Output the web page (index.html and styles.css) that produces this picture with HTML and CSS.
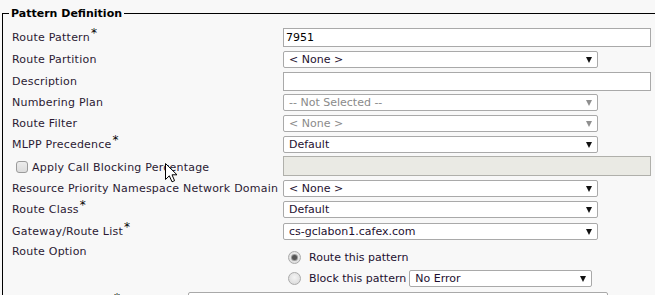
FILE: index.html
```html
<!DOCTYPE html>
<html>
<head>
<meta charset="utf-8">
<link rel="stylesheet" href="styles.css">
</head>
<body>
<fieldset class="group">
  <legend class="group-title">Pattern Definition</legend>
  <div class="form">
    <div class="row h22">
      <div class="label">Route Pattern<span class="req">*</span></div>
      <div class="field"><div class="input wide">7951</div></div>
    </div>
    <div class="row h22">
      <div class="label">Route Partition</div>
      <div class="field"><div class="select">&lt; None &gt;</div></div>
    </div>
    <div class="row h22">
      <div class="label">Description</div>
      <div class="field"><div class="input wide"></div></div>
    </div>
    <div class="row h21">
      <div class="label">Numbering Plan</div>
      <div class="field"><div class="select disabled">-- Not Selected --</div></div>
    </div>
    <div class="row h21">
      <div class="label">Route Filter</div>
      <div class="field"><div class="select disabled">&lt; None &gt;</div></div>
    </div>
    <div class="row h21">
      <div class="label">MLPP Precedence<span class="req">*</span></div>
      <div class="field"><div class="select">Default</div></div>
    </div>
    <div class="row h22">
      <div class="label check-label"><span class="checkbox"></span>Apply Call Blocking Percentage</div>
      <div class="field"><div class="input wide off"></div></div>
    </div>
    <div class="row h22">
      <div class="label">Resource Priority Namespace Network Domain</div>
      <div class="field"><div class="select">&lt; None &gt;</div></div>
    </div>
    <div class="row h21">
      <div class="label">Route Class<span class="req">*</span></div>
      <div class="field"><div class="select">Default</div></div>
    </div>
    <div class="row h22">
      <div class="label">Gateway/Route List<span class="req">*</span></div>
      <div class="field"><div class="select">cs-gclabon1.cafex.com</div></div>
    </div>
    <div class="row top">
      <div class="label">Route Option</div>
      <div class="field radios">
        <div class="radio-line"><span class="radio checked"></span>Route this pattern</div>
        <div class="radio-line"><span class="radio"></span>Block this pattern <div class="select small">No Error</div></div>
      </div>
    </div>
    <div class="row alt">
      <div class="label">Call Classification<span class="req">*</span></div>
      <div class="field"><div class="select">OffNet</div></div>
    </div>
  </div>
</fieldset>
<svg class="cursor" width="13" height="20" viewBox="0 0 13 20"><path d="M0.5 0.5 L0.5 16.5 L4.3 12.8 L7 18.8 L9.6 17.7 L7 11.8 L12 11.8 Z" fill="#fff" stroke="#000" stroke-width="1" stroke-linejoin="miter"/></svg>
</body>
</html>
```
FILE: styles.css
```css
html, body {
  margin: 0;
  padding: 0;
  background: #f8f8f8;
  overflow: hidden;
  width: 655px;
  height: 295px;
}
body {
  font-family: "DejaVu Sans", Verdana, sans-serif;
  font-size: 11px;
  color: #2b1a33;
  position: relative;
}
.group {
  margin: 7px 0 0 2px;
  padding: 0 0 0 6px;
  border: 1px solid #000;
  width: 720px;
}
.group-title {
  font-weight: bold;
  font-size: 11px;
  color: #000;
  padding: 0 2px;
  margin-left: 0;
  line-height: 13px;
}
.form {
  padding-top: 6px;
}
.row {
  display: flex;
  align-items: center;
}
.row.h22 { height: 22px; }
.row.h21 { height: 21px; }
.row.top { align-items: flex-start; }
.label {
  width: 271px;
  padding-left: 3px;
  white-space: nowrap;
  line-height: 13px;
  letter-spacing: 0.22px;
}
.row.top .label { padding-top: 3px; }
.req {
  color: #000;
  font-size: 12px;
  position: relative;
  top: -4px;
  margin-left: 1px;
}
.field {
  display: flex;
  align-items: center;
}
.input {
  box-sizing: border-box;
  height: 19px;
  border: 1px solid #a9a9a9;
  background: #fff;
  padding: 0 2px;
  line-height: 17px;
  color: #000;
}
.input.wide { width: 368px; }
.input.off { background: #eaeae4; border-color: #b0b0ab; height: 20px; }
.select {
  box-sizing: border-box;
  width: 315px;
  height: 17px;
  border: 1px solid #a9a9a9;
  border-radius: 2px;
  background: #fff;
  padding-left: 5px;
  line-height: 15px;
  color: #1e1030;
  position: relative;
}
.select::after {
  content: "";
  position: absolute;
  right: 5px;
  top: 5px;
  border-left: 3px solid transparent;
  border-right: 3px solid transparent;
  border-top: 6px solid #111;
}
.select.disabled { color: #8a8a8a; }
.select.disabled::after { border-top-color: #8f8f8f; }
.select.small {
  width: 183px;
  margin-left: 3px;
}
.check-label {
  display: flex;
  align-items: center;
  padding-left: 7px;
  width: 267px;
  padding-top: 2px;
}
.checkbox {
  box-sizing: border-box;
  width: 12px;
  height: 12px;
  border: 1px solid #9b9b9b;
  border-radius: 3px;
  background: linear-gradient(#ececec, #dcdcdc);
  margin-right: 4px;
}
.radios {
  flex-direction: column;
  align-items: flex-start;
  padding-top: 5px;
}
.radio-line {
  height: 21px;
  display: flex;
  align-items: center;
  color: #1e1030;
  font-size: 11px;
  padding-left: 5px;
}
.radio {
  box-sizing: border-box;
  width: 13px;
  height: 13px;
  border-radius: 50%;
  border: 1px solid #aaa;
  background: radial-gradient(circle at 50% 40%, #f4f4f4, #d6d6d6);
  margin-right: 8px;
  position: relative;
}
.radio.checked::after {
  content: "";
  position: absolute;
  left: 3px;
  top: 3px;
  width: 5px;
  height: 5px;
  border-radius: 50%;
  background: #555;
  box-shadow: 0 0 0 1px #9a9a9a;
}
.row.alt { height: 22px; padding-top: 3px; align-items: flex-start; }
.row.alt .label { width: 176px; padding-top: 4px; }
.row.alt .select { width: 420px; }
.cursor {
  position: absolute;
  left: 165px;
  top: 163px;
}
```
